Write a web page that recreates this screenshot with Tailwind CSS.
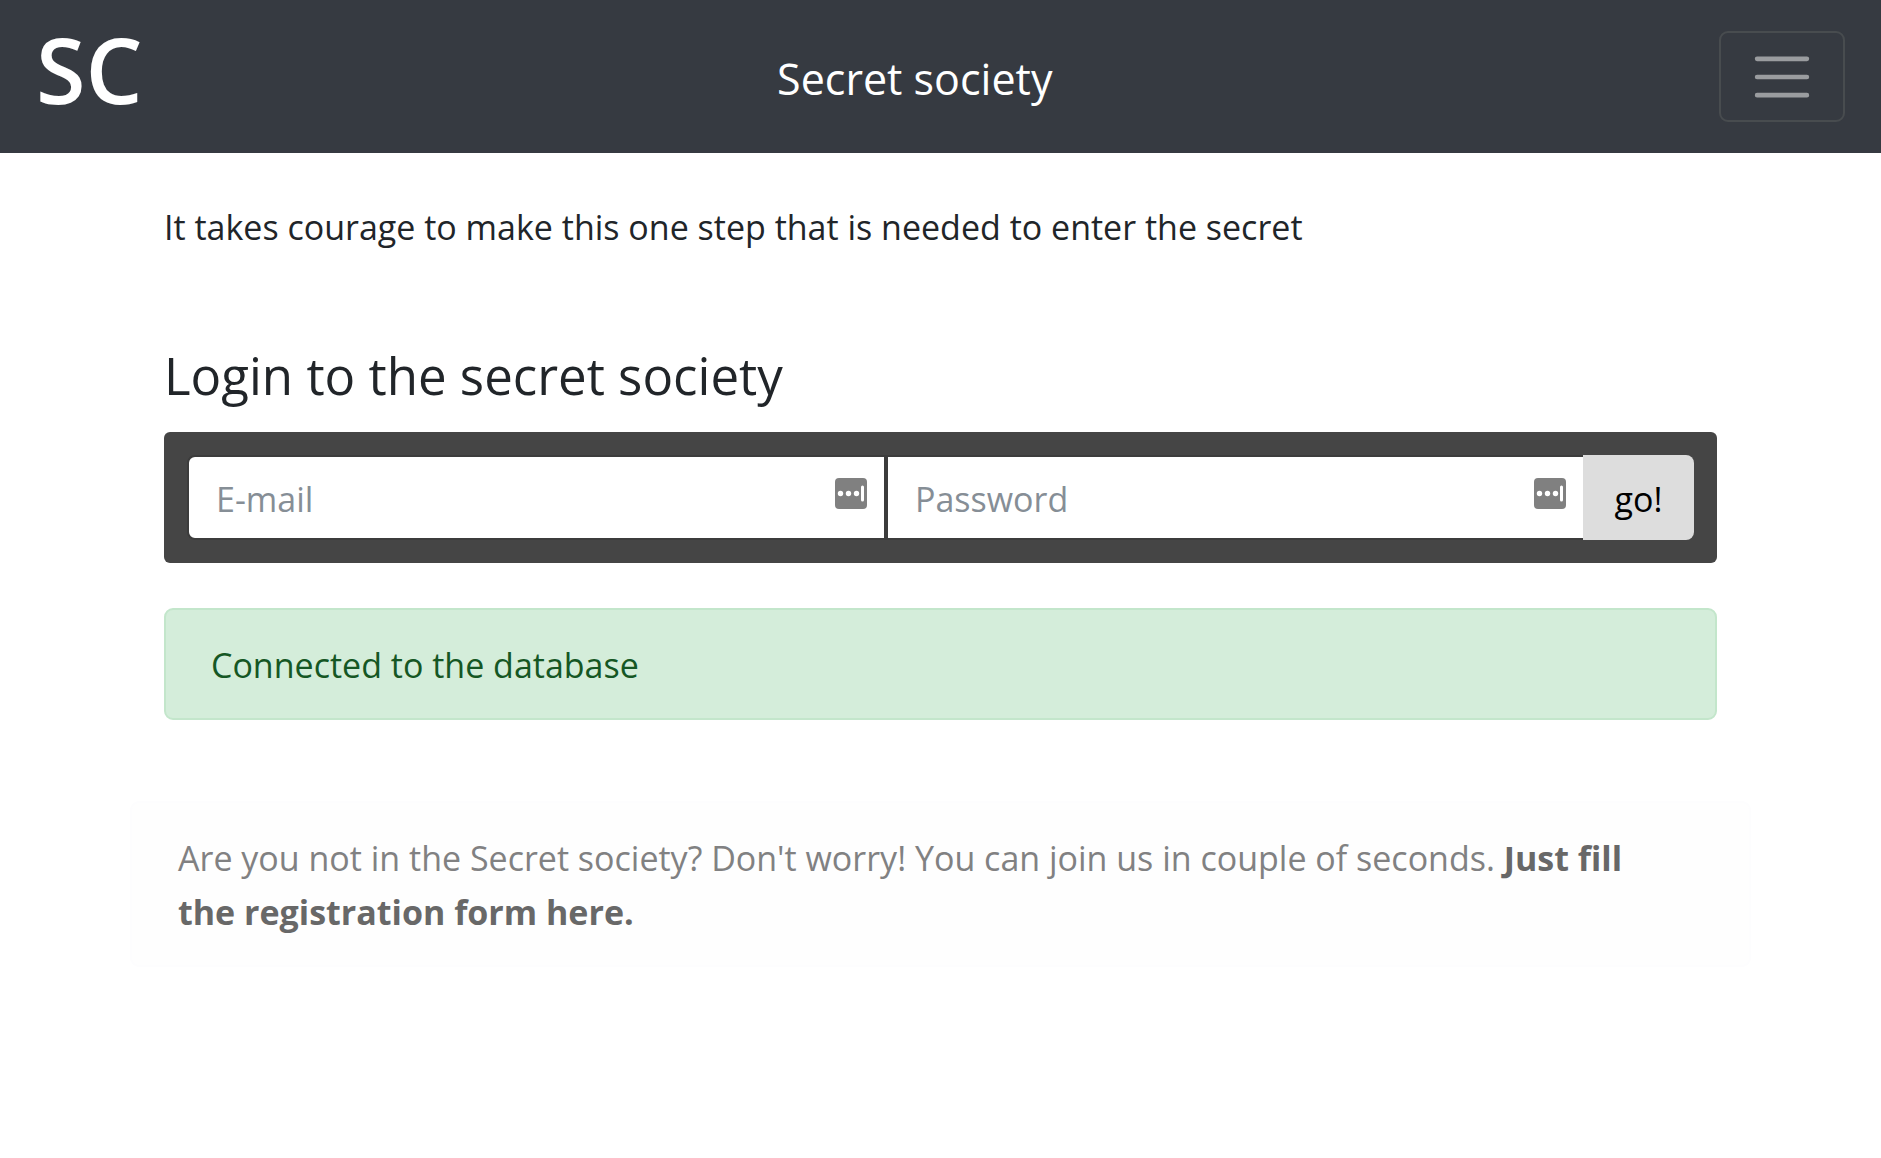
<!DOCTYPE html>
<html lang="en">
<head>
<meta charset="utf-8">
<meta name="viewport" content="width=device-width, initial-scale=1">
<title>Secret society</title>
<script src="https://cdn.jsdelivr.net/npm/@tailwindcss/browser@4"></script>
</head>
<body class="min-h-screen bg-white font-['Open_Sans',sans-serif] text-[34px] leading-[54px] text-[#212529]">
  <header class="flex h-[153px] items-center justify-between bg-[#363a41] px-9 text-white">
    <a href="#" class="pb-4 text-[90px] leading-[100px] font-semibold">SC</a>
    <a href="#" class="mr-8 pt-1 text-[43px] leading-[68px]">Secret society</a>
    <button type="button" aria-label="Toggle navigation" class="flex h-[91px] w-[126px] items-center justify-center rounded-[9px] border-2 border-[#484c4f]">
      <svg class="h-[68px] w-[68px]" viewBox="0 0 30 30" fill="none" stroke="#9a9c9f" stroke-width="2" stroke-linecap="round" stroke-miterlimit="10"><path d="M4 7h22M4 15h22M4 23h22"/></svg>
    </button>
  </header>

  <main class="px-[130px] pt-[47px]">
    <div class="px-[34px]">
      <p>It takes courage to make this one step that is needed to enter the secret</p>
      <h1 class="mt-[89px] text-[51px] leading-[65px]">Login to the secret society</h1>

      <form class="mt-6 flex rounded-md bg-[#454545] p-[23px]">
        <div class="relative grow basis-0.5">
          <input type="email" placeholder="E-mail" aria-label="E-mail" class="h-[85px] w-full rounded-l-lg border-2 border-[#3c3c3c] bg-white pt-0.5 pr-20 pl-[27px] placeholder:text-[#868e96]">
          <svg class="absolute top-[23px] right-[19px] h-8 w-8" viewBox="0 0 32 32"><rect width="32" height="31" rx="4" fill="#808080"/><g fill="#fff"><circle cx="5.500" cy="15.500" r="2.700"/><circle cx="13.500" cy="15.500" r="2.700"/><circle cx="21.500" cy="15.500" r="2.700"/><rect x="26" y="7.500" width="3" height="16" rx="1.500"/></g></svg>
        </div>
        <div class="relative grow basis-0">
          <input type="password" placeholder="Password" aria-label="Password" class="h-[85px] w-full border-2 border-r-0 border-[#3c3c3c] bg-white pt-0.5 pr-20 pl-[27px] placeholder:text-[#868e96]">
          <svg class="absolute top-[23px] right-[17px] h-8 w-8" viewBox="0 0 32 32"><rect width="32" height="31" rx="4" fill="#808080"/><g fill="#fff"><circle cx="5.500" cy="15.500" r="2.700"/><circle cx="13.500" cy="15.500" r="2.700"/><circle cx="21.500" cy="15.500" r="2.700"/><rect x="26" y="7.500" width="3" height="16" rx="1.500"/></g></svg>
        </div>
        <button type="submit" class="h-[85px] w-[111px] rounded-r-lg bg-[#ddd] pt-0.5 text-black">go!</button>
      </form>

      <div role="status" class="mt-[45px] rounded-[9px] border-2 border-[#c3e6cb] bg-[#d4edda] px-[45px] pt-7 pb-[26px] text-[#155724]">Connected to the database</div>
    </div>

    <p class="mt-[81px] rounded-[9px] border-2 border-[#fdfdfe] bg-[#fefefe] pt-7 pr-20 pb-[26px] pl-[46px] text-[#818182]">Are you not in the Secret society? Don't worry! You can join us in couple of seconds. <a href="#" class="font-bold text-[#686868]">Just fill the registration form here.</a></p>
  </main>
</body>
</html>
